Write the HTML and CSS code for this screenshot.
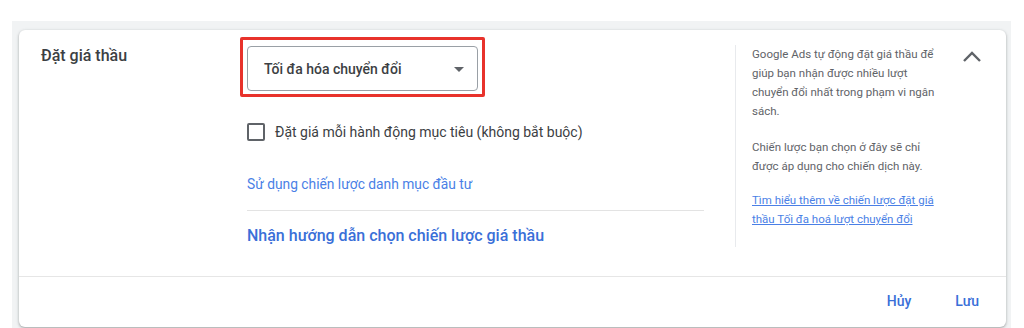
FILE: index.html
```html
<!DOCTYPE html>
<html lang="vi">
<head>
<meta charset="utf-8">
<title>Đặt giá thầu</title>
<link rel="stylesheet" href="styles.css">
</head>
<body>
<div class="page">
  <section class="card">
    <div class="card-body">
      <div class="label-col">Đặt giá thầu</div>
      <div class="main-col">
        <div class="highlight">
          <div class="select">
            <span class="select-text">Tối đa hóa chuyển đổi</span>
            <svg class="select-arrow" viewBox="0 0 24 24" width="24" height="24"><path d="M7 10l5 5 5-5z"/></svg>
          </div>
        </div>
        <label class="check-row">
          <span class="checkbox"></span>
          <span class="check-label">Đặt giá mỗi hành động mục tiêu (không bắt buộc)</span>
        </label>
        <a class="portfolio-link">Sử dụng chiến lược danh mục đầu tư</a>
        <div class="divider"></div>
        <a class="guide-link">Nhận hướng dẫn chọn chiến lược giá thầu</a>
      </div>
      <aside class="help-col">
        <p>Google Ads tự động đặt giá thầu để giúp bạn nhận được nhiều lượt chuyển đổi nhất trong phạm vi ngân sách.</p>
        <p>Chiến lược bạn chọn ở đây sẽ chỉ được áp dụng cho chiến dịch này.</p>
        <p><a class="help-link">Tìm hiểu thêm về chiến lược đặt giá thầu Tối đa hoá lượt chuyển đổi</a></p>
      </aside>
      <div class="collapse">
        <svg viewBox="0 0 24 24" width="24" height="24"><polyline points="4,16 12,8 20,16" fill="none" stroke="#5f6368" stroke-width="2.4"/></svg>
      </div>
    </div>
    <div class="card-footer">
      <button class="btn">Hủy</button>
      <button class="btn">Lưu</button>
    </div>
  </section>
</div>
</body>
</html>
```

FILE: styles.css
```css
* { box-sizing: border-box; }
html, body { margin: 0; padding: 0; background: #ffffff; }
body { font-family: Roboto, "Noto Sans", Arial, sans-serif; color: #3c4043; overflow: hidden; }

.page {
  margin: 21px 13px 0 12px;
  padding: 9px 5px 0 7px;
  background: #f1f3f4;
  height: 307px;
}

.card {
  background: #ffffff;
  border-radius: 6px;
  box-shadow: 0 1px 2px rgba(60,64,67,0.3), 0 1px 3px 1px rgba(60,64,67,0.12);
  display: flex;
  flex-direction: column;
}

.card-body {
  display: flex;
  padding: 15px 22px 29px 20px;
}

.label-col {
  width: 208px;
  flex: none;
  padding-left: 2px;
  font-size: 16px;
  font-weight: 500;
  line-height: 22px;
  color: #3c4043;
}

.main-col {
  width: 457px;
  flex: none;
  margin-top: 1px;
  display: flex;
  flex-direction: column;
  align-items: flex-start;
}

.highlight {
  position: relative;
  width: 231px;
}
.highlight::after {
  content: "";
  position: absolute;
  left: -7px; right: -7px; top: -9px; bottom: -6px;
  border: 3px solid #e8322b;
  border-radius: 2px;
  pointer-events: none;
}

.select {
  height: 45px;
  border: 1px solid #9aa0a6;
  border-radius: 4px;
  display: flex;
  align-items: center;
  justify-content: space-between;
  padding: 0 6px 0 16px;
}
.select-text {
  font-size: 14px;
  font-weight: 500;
  color: #3c4043;
}
.select-arrow { fill: #5f6368; display: block; }

.check-row {
  margin-top: 31px;
  display: flex;
  align-items: center;
  gap: 10px;
}
.checkbox {
  width: 18px;
  height: 18px;
  border: 2px solid #5f6368;
  border-radius: 2px;
  flex: none;
}
.check-label {
  font-size: 14px;
  line-height: 20px;
  color: #3c4043;
}

.portfolio-link {
  margin-top: 32px;
  font-size: 13.8px;
  line-height: 20px;
  color: #4a7fe6;
}

.divider {
  align-self: stretch;
  height: 1px;
  background: #e3e3e3;
  margin-top: 16px;
}

.guide-link {
  margin-top: 14px;
  font-size: 16px;
  font-weight: 500;
  line-height: 22px;
  color: #3a6fd8;
}

.help-col {
  width: 207px;
  flex: none;
  margin-left: 31px;
  border-left: 1px solid #e8eaed;
  padding-left: 16px;
  font-size: 11.5px;
  line-height: 19px;
  color: #5f6368;
}
.help-col p { margin: 0; width: 188px; }
.help-col p + p { margin-top: 17px; }
.help-col p:last-child { margin-top: 15px; }
.help-link { color: #4a7fe6; text-decoration: underline; }

.collapse {
  margin-left: auto;
  width: 24px;
  height: 24px;
}
.collapse svg { display: block; }

.card-footer {
  border-top: 1px solid #e6e6e6;
  height: 51px;
  display: flex;
  align-items: center;
  justify-content: flex-end;
  gap: 44px;
  padding: 0 27px 2px 0;
}
.btn {
  border: 0;
  background: none;
  padding: 0;
  font-family: Roboto, "Noto Sans", Arial, sans-serif;
  font-size: 14px;
  font-weight: 500;
  color: #3a6fd8;
}
```
